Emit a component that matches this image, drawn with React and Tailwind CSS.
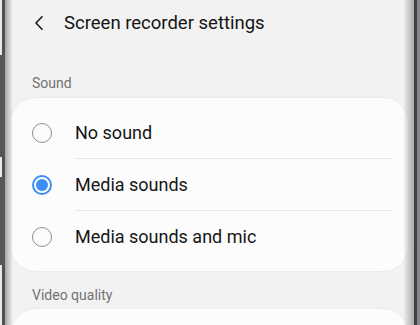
import React from 'react';

const options = ['No sound', 'Media sounds', 'Media sounds and mic'];

const Radio = ({ checked }) =>
    checked ? (
        <span className="w-[20px] h-[20px] rounded-full border-2 border-[#3e8ef7] flex items-center justify-center shrink-0">
            <span className="w-[12px] h-[12px] rounded-full bg-[#3e8ef7]" />
        </span>
    ) : (
        <span className="w-[20px] h-[20px] rounded-full border-[1.5px] border-[#8e8e8e] shrink-0" />
    );

const SectionLabel = ({ children, className }) => (
    <div className={`px-[27px] text-[14px] leading-[16px] text-[#737373] ${className}`}>{children}</div>
);

export default function App() {
    const selected = 1;

    return (
        <div
            className="w-[420px] h-[325px] flex overflow-hidden bg-[#f2f2f2]"
            style={{ fontFamily: 'Roboto, "Noto Sans", sans-serif' }}
        >
            {/* left bezel with side keys */}
            <div className="w-[5px] flex flex-col shrink-0 bg-[#e9e9e9]">
                <div className="h-[55px] ml-[2px] bg-[#505056]" />
                <div className="h-[102px] bg-[#55555b]" />
                <div className="h-[20px] ml-[2px] bg-[#505056]" />
                <div className="h-[88px] bg-[#55555b]" />
                <div className="flex-1 ml-[2px] bg-[#505056]" />
            </div>

            {/* screen */}
            <div className="relative flex-1 bg-[#f2f2f2]">
                <div className="h-[60px] pt-[11px] flex items-start">
                    <svg width="8" height="14" viewBox="0 0 8 14" className="ml-[30px] mt-[5px]">
                        <path d="M7 0.8 L1 7 L7 13.2" fill="none" stroke="#1a1a1a" strokeWidth="1.6" strokeLinecap="round" strokeLinejoin="round" />
                    </svg>
                    <span className="ml-[21px] text-[18.5px] leading-[24px] text-[#141414]">
                        Screen recorder settings
                    </span>
                </div>

                <SectionLabel className="pt-[15px] pb-[6px]">Sound</SectionLabel>

                <div className="mx-[5px] bg-[#fcfcfc] rounded-[26px] border border-[#ececec] pt-[9px] pb-[8px]">
                    {options.map((label, i) => (
                        <div key={label} className="h-[52px] flex items-center">
                            <div className="w-[64px] pl-[21px] flex items-center">
                                <Radio checked={i === selected} />
                            </div>
                            <div
                                className={`flex-1 h-full mr-[17px] flex items-center text-[18px] leading-[20px] text-[#161616] ${
                                    i < options.length - 1 ? 'border-b border-[#e6e6e6]' : ''
                                }`}
                            >
                                {label}
                            </div>
                        </div>
                    ))}
                </div>

                <SectionLabel className="pt-[15px] pb-[5px]">Video quality</SectionLabel>

                <div className="mx-[5px] h-[60px] bg-[#fcfcfc] rounded-t-[26px] border border-[#ececec]" />

                {/* curved glass shading */}
                <div className="absolute left-0 top-0 bottom-0 w-[8px] bg-gradient-to-r from-[#a6a6a6] to-transparent" />
                <div className="absolute right-0 top-0 bottom-0 w-[11px] bg-gradient-to-l from-[#a9a9ad] to-transparent" />
            </div>

            {/* right bezel */}
            <div className="w-[6px] flex shrink-0">
                <div className="w-[3px] bg-[#3f3f45]" />
                <div className="w-[3px] bg-[#86868a]" />
            </div>
        </div>
    );
}
